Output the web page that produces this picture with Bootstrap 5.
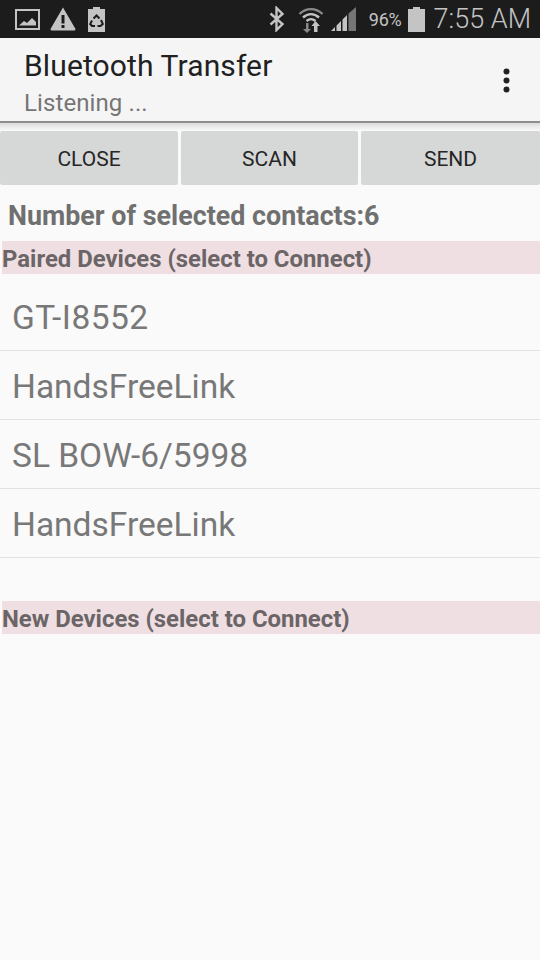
<!DOCTYPE html>
<html lang="en">
<head>
    <meta charset="UTF-8">
    <meta name="viewport" content="width=device-width, initial-scale=1.0">
    <title>Bluetooth Transfer</title>
    <link href="https://cdn.jsdelivr.net/npm/bootstrap@5.3.0/dist/css/bootstrap.min.css" rel="stylesheet">
    <style>
        html, body { height: 100%; }
        body {
            width: 540px;
            height: 960px;
            overflow: hidden;
            background-color: #fafafa;
            font-family: Roboto, sans-serif;
        }
        .status-bar {
            height: 38px;
            background-color: #1c1c1c;
            color: #c4c4c4;
            padding: 0 9px 0 15px;
        }
        .status-left { gap: 10px; }
        .ic-warn { margin-left: -1px; }
        .ic-recycle { margin-left: 2px; }
        .ic-wifi { margin-left: 13px; }
        .ic-signal { margin-left: 7px; margin-right: 1px; }
        .status-pct { font-size: 18px; margin-left: 11px; margin-right: 6px; letter-spacing: -0.2px; }
        .status-time { font-size: 27px; font-weight: 300; margin-left: 9px; line-height: 1; }
        .app-bar {
            height: 85px;
            background-color: #f5f5f5;
            border-bottom: 2px solid #8e8e8e;
            padding: 9px 30px 0 24px;
        }
        .app-title { font-size: 30px; line-height: 38px; color: #212121; letter-spacing: 0.12px; }
        .app-sub { font-size: 24px; line-height: 30px; color: #757575; margin-top: 3px; letter-spacing: 0.1px; }
        .ic-more { margin-top: 21px; }
        .bar-shadow {
            height: 8px;
            background: linear-gradient(#dcdcdc, #fafafa);
        }
        .btn-row { gap: 3px; }
        .act-btn {
            flex: 1 1 0;
            height: 54px;
            padding: 0;
            border: 0;
            border-radius: 2px;
            background-color: #d6d8d7;
            color: #262626;
            font-size: 21px;
            line-height: 56px;
            text-align: center;
        }
        .act-btn:nth-child(1) { flex: 0 0 178px; }
        .act-btn:nth-child(3) { flex: 0 0 179px; }
        .sel-count {
            font-size: 26.85px;
            font-weight: 700;
            color: #707070;
            line-height: 32px;
            padding: 15px 0 0 8px;
            height: 56px;
        }
        .sec-label {
            height: 33px;
            margin-left: 2px;
            background-color: #efdfe2;
            color: #6b6567;
            font-size: 23.9px;
            font-weight: 700;
            line-height: 36px;
        }
        .dev-list .list-group-item {
            height: 69px;
            padding: 0 0 0 12px;
            background: transparent;
            border-color: #e2e2e2;
            color: #787878;
            font-size: 33.5px;
            line-height: 72px;
        }
        .dev-list .list-group-item:first-child { height: 77px; line-height: 88px; letter-spacing: 0.5px; }
        .dev-list .list-group-item:last-child { height: 68px; }
        .dev-list { border-bottom: 1px solid #e2e2e2; margin-bottom: 43px; }
    </style>
</head>
<body>
    <!-- status bar -->
    <div class="status-bar d-flex align-items-center">
        <div class="status-left d-flex align-items-center">
            <svg width="26" height="22" viewBox="0 0 26 22" fill="none">
                <rect x="1" y="2" width="23" height="19" stroke="#c4c4c4" stroke-width="2"/>
                <path d="M4 17.5 L9 13 L12 15 L17 10 L21 14 V17.5 Z" fill="#c4c4c4"/>
            </svg>
            <svg class="ic-warn" width="26" height="24" viewBox="0 0 26 24">
                <path fill="#c4c4c4" d="M13 0.5 L25.5 22 Q25.5 23.5 24 23.5 H2 Q0.5 23.5 0.5 22 Z"/>
                <rect x="11.5" y="8" width="3" height="8.5" fill="#1c1c1c"/>
                <rect x="11.5" y="18" width="3" height="3" fill="#1c1c1c"/>
            </svg>
            <svg class="ic-recycle" width="17" height="25" viewBox="0 0 17 25">
                <path fill="#c4c4c4" d="M5 0H12V2H17V25H0V2H5Z"/>
                <path fill="none" stroke="#1c1c1c" stroke-width="2" d="M5.5 11.5 L8.5 8.5 L11.5 11.5 M13 13 L14.8 17 L12.5 19 H9.5 M7 19 H4 L2.2 17 L4 13.5"/>
            </svg>
        </div>
        <div class="ms-auto d-flex align-items-center">
            <svg width="16" height="26" viewBox="0 0 16 26" fill="none">
                <path stroke="#c4c4c4" stroke-width="2.4" d="M1.5 7.5 L13.5 18 L7.5 24 V2 L13.5 8 L1.5 18.5"/>
            </svg>
            <svg class="ic-wifi" width="26" height="27" viewBox="0 0 26 27" fill="none">
                <path stroke="#8a8a8a" stroke-width="2.4" d="M1.5 8 C8 1.5 18 1.5 24.5 8"/>
                <path stroke="#c4c4c4" stroke-width="2.4" d="M5 11.5 C10 7 16 7 21 11.5"/>
                <path stroke="#c4c4c4" stroke-width="2.4" d="M8.5 15 C11.5 12.5 14.5 12.5 17.5 15"/>
                <path fill="#8a8a8a" d="M8 17 V23 H5 L9 27 L13 23 H10.5 V17 Z"/>
                <path fill="#c4c4c4" d="M17.5 15 L22 20 H19.5 V26 H16 V20 H13.5 Z"/>
            </svg>
            <svg class="ic-signal" width="26" height="24" viewBox="0 0 26 24">
                <path fill="#c4c4c4" d="M0 24 L4 20 V24 Z M5.5 18.5 L10 14 V24 H5.5 Z M11.5 12.5 L16 8 V24 H11.5 Z"/>
                <path fill="#767676" d="M17.5 6.5 L25 0 V24 H17.5 Z"/>
            </svg>
            <span class="status-pct">96%</span>
            <svg width="17" height="25" viewBox="0 0 17 25"><path fill="#c4c4c4" d="M5 0H12V2H17V25H0V2H5Z"/></svg>
            <span class="status-time">7:55 AM</span>
        </div>
    </div>

    <!-- action bar -->
    <div class="app-bar d-flex justify-content-between">
        <div>
            <div class="app-title">Bluetooth Transfer</div>
            <div class="app-sub">Listening ...</div>
        </div>
        <svg class="ic-more" width="7" height="25" viewBox="0 0 7 25">
            <circle cx="3.5" cy="3.5" r="3" fill="#212121"/>
            <circle cx="3.5" cy="12.5" r="3" fill="#212121"/>
            <circle cx="3.5" cy="21.5" r="3" fill="#212121"/>
        </svg>
    </div>
    <div class="bar-shadow"></div>

    <div class="btn-row d-flex">
        <button type="button" class="btn act-btn">CLOSE</button>
        <button type="button" class="btn act-btn">SCAN</button>
        <button type="button" class="btn act-btn">SEND</button>
    </div>

    <div class="sel-count">Number of selected contacts:6</div>

    <div class="sec-label">Paired Devices (select to Connect)</div>
    <ul class="list-group list-group-flush dev-list">
        <li class="list-group-item">GT-I8552</li>
        <li class="list-group-item">HandsFreeLink</li>
        <li class="list-group-item">SL BOW-6/5998</li>
        <li class="list-group-item">HandsFreeLink</li>
    </ul>

    <div class="sec-label">New Devices (select to Connect)</div>

    <script src="https://cdn.jsdelivr.net/npm/bootstrap@5.3.0/dist/js/bootstrap.bundle.min.js"></script>
</body>
</html>
